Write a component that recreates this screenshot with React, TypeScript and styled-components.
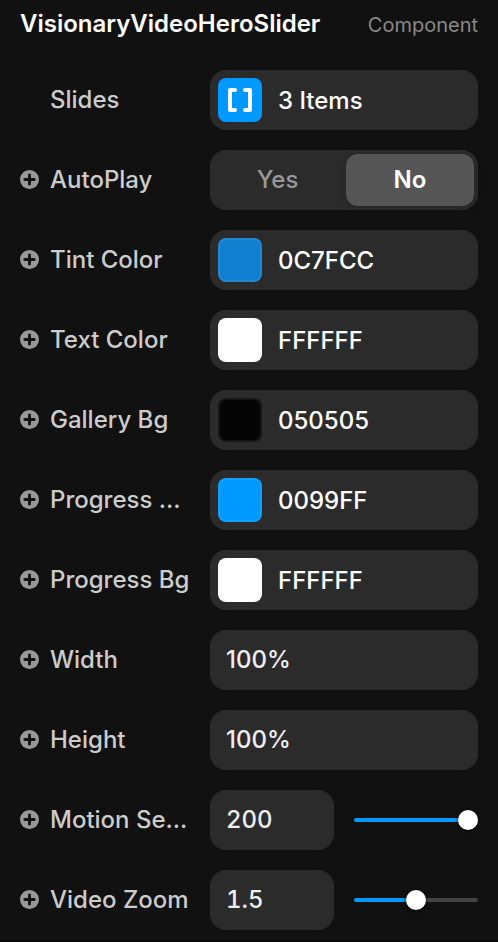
import React from "react";
import styled, { createGlobalStyle } from "styled-components";

const GlobalStyle = createGlobalStyle`
  * { box-sizing: border-box; }
  body { margin: 0; background: #111111; }
`;

const Panel = styled.main`
  width: 498px;
  height: 942px;
  overflow: hidden;
  padding: 0 20px;
  background: #111111;
  color: #ffffff;
  font-family: Inter, sans-serif;
  font-size: 24px;
  font-weight: 500;
  border-bottom: 1px solid #0b050b;
`;

const Header = styled.header`
  display: flex;
  align-items: center;
  justify-content: space-between;
  height: 48px;
  margin-bottom: 22px;
`;

const Title = styled.h1`
  margin: 0;
  font-size: 24px;
  font-weight: 600;
  line-height: 48px;
  letter-spacing: 0;
`;

const Kind = styled.span`
  padding-top: 2px;
  font-size: 20px;
  font-weight: 400;
  color: #888888;
`;

const Rows = styled.div`
  display: flex;
  flex-direction: column;
  gap: 20px;
`;

const Row = styled.div`
  display: grid;
  grid-template-columns: 30px 160px 268px;
  align-items: center;
  height: 60px;
`;

const PlusIcon = styled.svg`
  display: block;
  width: 19px;
  height: 19px;
  margin-bottom: 1px;
`;

const Label = styled.span`
  white-space: nowrap;
  color: #cccccc;
  line-height: 60px;
`;

const Field = styled.div<{ $inset?: number; $width?: number }>`
  display: flex;
  align-items: center;
  gap: 16px;
  width: ${(p) => p.$width ?? 268}px;
  height: 60px;
  padding: 0 ${(p) => p.$inset ?? 8}px;
  border-radius: 16px;
  background: #2b2b2b;
`;

const Value = styled.span`
  line-height: 60px;
  padding-top: 1px;
`;

const InputValue = styled.span<{ $tabular?: boolean }>`
  line-height: 60px;
  color: #eeeeee;
  font-variant-numeric: ${(p) => (p.$tabular ? "tabular-nums" : "normal")};
`;

const Swatch = styled.span<{ $color: string }>`
  display: flex;
  align-items: center;
  justify-content: center;
  width: 44px;
  height: 44px;
  border-radius: 8px;
  background: ${(p) => p.$color};
  box-shadow: inset 0 0 0 2px rgba(255, 255, 255, 0.07);
`;

const ListBadge = styled(Swatch)`
  box-shadow: none;
`;

const Segments = styled(Field)`
  gap: 0;
  padding: 4px;
`;

const Segment = styled.button<{ $active?: boolean }>`
  flex: 0 0 ${(p) => (p.$active ? 128 : 132)}px;
  height: 52px;
  padding: 0 ${(p) => (p.$active ? 0 : 5)}px 1px 0;
  border: 0;
  border-radius: 12px;
  background: ${(p) => (p.$active ? "#555555" : "transparent")};
  box-shadow: ${(p) => (p.$active ? "0 2px 8px rgba(0, 0, 0, 0.15)" : "none")};
  color: ${(p) => (p.$active ? "#ffffff" : "#999999")};
  font: ${(p) => (p.$active ? 600 : 500)} 24px Inter, sans-serif;
`;

const SliderControl = styled.div`
  display: flex;
  align-items: center;
  gap: 20px;
`;

const Track = styled.div`
  display: flex;
  align-items: center;
  width: 124px;
  height: 20px;
`;

const Filled = styled.span<{ $length: number }>`
  width: ${(p) => p.$length}px;
  height: 4px;
  border-radius: 2px 0 0 2px;
  background: #0099ff;
`;

const Rest = styled.span`
  flex: 1;
  height: 4px;
  border-radius: 0 2px 2px 0;
  background: #444444;
`;

const Knob = styled.span`
  width: 20px;
  height: 20px;
  border-radius: 50%;
  background: #ffffff;
  box-shadow: 0 2px 4px rgba(0, 0, 0, 0.3), 0 0 0 2px rgba(0, 0, 0, 0.15);
  z-index: 1;
`;

const Plus = () => (
  <PlusIcon viewBox="0 0 19 19">
    <circle cx="9.5" cy="9.5" r="9.5" fill="#999999" />
    <path d="M9.5 4.8v9.4M4.8 9.5h9.4" stroke="#111111" strokeWidth="2.8" strokeLinecap="round" />
  </PlusIcon>
);

interface PropertyProps {
  label: string;
  fixed?: boolean;
  children: React.ReactNode;
}

const Property = ({ label, fixed, children }: PropertyProps) => (
  <Row>
    {fixed ? <span /> : <Plus />}
    <Label>{label}</Label>
    {children}
  </Row>
);

const ColorField = ({ hex, swatch }: { hex: string; swatch?: string }) => (
  <Field>
    <Swatch $color={swatch ?? `#${hex}`} />
    <Value>{hex}</Value>
  </Field>
);

const SliderField = ({ value, length }: { value: string; length: number }) => (
  <SliderControl>
    <Field $inset={16} $width={124}><InputValue $tabular>{value}</InputValue></Field>
    <Track>
      <Filled $length={length} />
      <Knob />
      <Rest />
    </Track>
  </SliderControl>
);

export default function App() {
  return (
    <>
      <GlobalStyle />
      <Panel>
        <Header>
          <Title>VisionaryVideoHeroSlider</Title>
          <Kind>Component</Kind>
        </Header>
        <Rows>
          <Property label="Slides" fixed>
            <Field>
              <ListBadge $color="#0099ff">
                <svg width="28" height="28" viewBox="0 0 28 28" fill="none" stroke="#fff" strokeWidth="4" strokeLinecap="round" strokeLinejoin="round">
                  <path d="M9 4H4v20h5M19 4h5v20h-5" />
                </svg>
              </ListBadge>
              <Value>3 Items</Value>
            </Field>
          </Property>
          <Property label="AutoPlay">
            <Segments>
              <Segment>Yes</Segment>
              <Segment $active>No</Segment>
            </Segments>
          </Property>
          <Property label="Tint Color"><ColorField hex="0C7FCC" swatch="#107fd0" /></Property>
          <Property label="Text Color"><ColorField hex="FFFFFF" /></Property>
          <Property label="Gallery Bg"><ColorField hex="050505" /></Property>
          <Property label="Progress ..."><ColorField hex="0099FF" /></Property>
          <Property label="Progress Bg"><ColorField hex="FFFFFF" /></Property>
          <Property label="Width"><Field $inset={16}><InputValue>100%</InputValue></Field></Property>
          <Property label="Height"><Field $inset={16}><InputValue>100%</InputValue></Field></Property>
          <Property label="Motion Se..."><SliderField value="200" length={104} /></Property>
          <Property label="Video Zoom"><SliderField value="1.5" length={52} /></Property>
        </Rows>
      </Panel>
    </>
  );
}
